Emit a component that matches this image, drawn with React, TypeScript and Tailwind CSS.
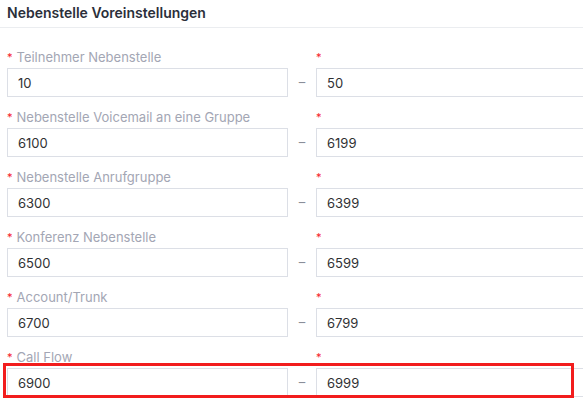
import React from 'react';

const rows = [
  { label: 'Teilnehmer Nebenstelle', from: '10', to: '50' },
  { label: 'Nebenstelle Voicemail an eine Gruppe', from: '6100', to: '6199' },
  { label: 'Nebenstelle Anrufgruppe', from: '6300', to: '6399' },
  { label: 'Konferenz Nebenstelle', from: '6500', to: '6599' },
  { label: 'Account/Trunk', from: '6700', to: '6799' },
  { label: 'Call Flow', from: '6900', to: '6999' },
];

function Label({ text }: { text?: string }) {
  return (
    <div className="h-[21px] flex items-center text-[13px] text-[#a3a6b4] whitespace-nowrap">
      <span className="text-[#f5222d] mr-[4px] text-[11px] leading-none">*</span>
      {text}
    </div>
  );
}

function Box({ value }: { value: string }) {
  return (
    <input
      readOnly
      value={value}
      className="w-[281px] h-[29px] shrink-0 border border-[#dcdfe6] bg-white px-[10px] text-[13px] text-[#303133] outline-none"
    />
  );
}

export default function App() {
  return (
    <div className="relative w-[583px] h-[401px] overflow-hidden bg-white font-['Inter',sans-serif]">
      <div className="h-[28px] border-b border-[#ebedf0] pl-[7px] pt-[4px]">
        <h2 className="text-[14px] font-semibold text-[#2b2f3a] leading-[18px]">Nebenstelle Voreinstellungen</h2>
      </div>
      <div className="pl-[7px] pt-[19px] flex flex-col gap-[10px]">
        {rows.map((r) => (
          <div key={r.label} className="flex w-max">
            <div className="flex flex-col shrink-0 w-[281px]">
              <Label text={r.label} />
              <Box value={r.from} />
            </div>
            <div className="flex flex-col shrink-0 w-[28px]">
              <div className="h-[21px]" />
              <div className="h-[29px] flex items-center justify-center text-[13px] text-[#8a8e99]">–</div>
            </div>
            <div className="flex flex-col shrink-0 w-[281px]">
              <Label />
              <Box value={r.to} />
            </div>
          </div>
        ))}
      </div>
      <div className="absolute left-[3px] top-[363px] w-[571px] h-[35px] border-[3px] border-[#f21d1d] pointer-events-none" />
    </div>
  );
}
